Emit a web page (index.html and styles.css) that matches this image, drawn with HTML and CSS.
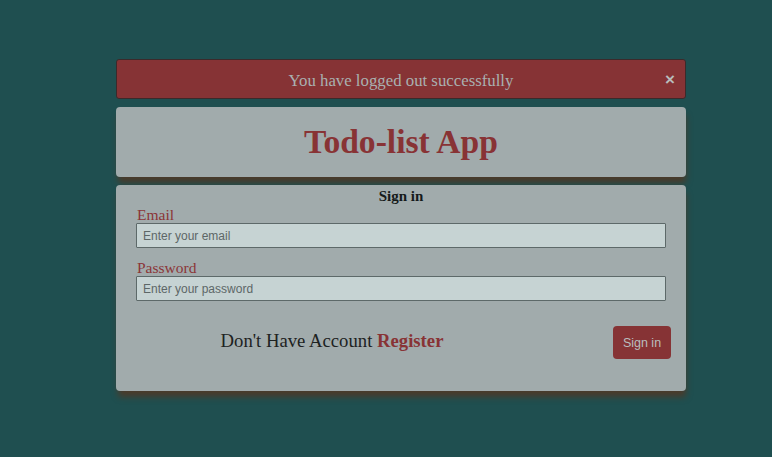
FILE: index.html
```html
<!DOCTYPE html>
<html>
<head>
<meta charset="utf-8">
<link rel="stylesheet" href="styles.css">
</head>
<body>
<div class="wrap">
  <div class="alert">
    <span class="alert-text">You have logged out successfully</span>
    <span class="close">&times;</span>
  </div>
  <div class="card header">
    <h1 class="title">Todo-list App</h1>
  </div>
  <div class="card form">
    <h2 class="form-title">Sign in</h2>
    <label class="label">Email</label>
    <input class="input" type="text" placeholder="Enter your email">
    <label class="label label-pw">Password</label>
    <input class="input" type="password" placeholder="Enter your password">
    <div class="row">
      <div class="account">Don't Have Account <span class="register">Register</span></div>
      <button class="btn">Sign in</button>
    </div>
  </div>
</div>
</body>
</html>
```
FILE: styles.css
```css
html, body {
  margin: 0;
  padding: 0;
}
body {
  background: #1f4f50;
  font-family: "Liberation Serif", "DejaVu Serif", serif;
  width: 772px;
  height: 457px;
  overflow: hidden;
}
.wrap {
  width: 570px;
  margin-left: 116px;
  padding-top: 59px;
  display: flex;
  flex-direction: column;
  gap: 8px;
}
.alert {
  box-sizing: border-box;
  height: 40px;
  padding-top: 3px;
  background: #863335;
  border: 1px solid #3b2a2b;
  border-radius: 3px;
  display: flex;
  align-items: center;
  justify-content: center;
  position: relative;
}
.alert-text {
  color: #a9b0b0;
  font-size: 16.8px;
}
.close {
  position: absolute;
  right: 10px;
  top: 10px;
  color: #b8bcbc;
  font-family: "Liberation Sans", sans-serif;
  font-weight: bold;
  font-size: 17px;
}
.card {
  background: #a1abac;
  border-radius: 4px;
  box-shadow: 1px 7px 6px -1px #4a3b2b;
}
.header {
  height: 70px;
  display: flex;
  align-items: center;
  justify-content: center;
}
.title {
  margin: 0;
  color: #883335;
  font-size: 33.6px;
  font-weight: bold;
}
.form {
  height: 206px;
  box-sizing: border-box;
  padding: 2px 20px 0 20px;
  display: flex;
  flex-direction: column;
}
.form-title {
  margin: 0;
  text-align: center;
  font-size: 15px;
  line-height: 19px;
  color: #151a1a;
}
.label {
  color: #8b3537;
  font-size: 15.5px;
  line-height: 17px;
  padding-left: 1px;
}
.label-pw {
  margin-top: 11px;
}
.input {
  box-sizing: border-box;
  width: 530px;
  height: 25px;
  margin: 0;
  background: #c6d3d3;
  border: 1px solid #5d6969;
  border-radius: 1px;
  padding: 0 6px;
  font-family: "Liberation Sans", sans-serif;
  font-size: 12px;
  color: #333;
  outline: none;
}
.input::placeholder {
  color: #5d6767;
}
.row {
  margin-top: 25px;
  display: flex;
  align-items: center;
  margin-right: -5px;
}
.account {
  width: 392px;
  text-align: center;
  font-size: 18.7px;
  line-height: 20px;
  color: #1d2222;
  margin-top: -3px;
}
.register {
  color: #883335;
  font-weight: bold;
}
.btn {
  margin-left: auto;
  width: 58px;
  height: 33px;
  background: #863335;
  border: none;
  border-radius: 4px;
  color: #b9bebe;
  font-family: "Liberation Sans", sans-serif;
  font-size: 12.5px;
  padding: 0;
}
```
